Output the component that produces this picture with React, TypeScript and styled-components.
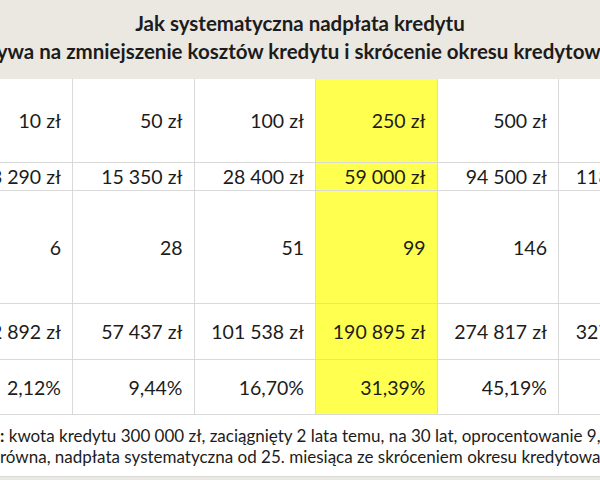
import React from "react";
import styled, { createGlobalStyle } from "styled-components";

const Global = createGlobalStyle`
  html, body { margin: 0; padding: 0; background: #ffffff; }
  body { font-family: Lato, "Noto Sans", sans-serif; color: #1c1c1c; }
`;

const Viewport = styled.div`
  width: 600px;
  height: 480px;
  overflow: hidden;
  background: #ebe8e1;
`;

const Sheet = styled.div`
  width: 1000px;
  margin-left: -200px;
  display: flex;
  flex-direction: column;
`;

const TitleBand = styled.header`
  height: 79px;
  box-sizing: border-box;
  padding-top: 9px;
  background: #ebe8e1;
  display: flex;
  flex-direction: column;
  align-items: center;
  font-weight: 700;
  font-size: 20.5px;
  line-height: 28px;
  white-space: nowrap;
`;

const Table = styled.div`
  display: grid;
  grid-template-columns: 151.5px repeat(7, 121.5px);
  background: #ffffff;
`;

const Cell = styled.div<{ $h: number; $hl?: boolean }>`
  height: ${(p) => p.$h}px;
  box-sizing: border-box;
  border-right: 1px solid #d9d9d9;
  border-bottom: 1px solid #d9d9d9;
  background: ${(p) => (p.$hl ? "#ffff4f" : "#ffffff")};
  display: flex;
  align-items: center;
  justify-content: flex-end;
  padding-right: 11px;
  font-size: 19.5px;
  white-space: nowrap;
`;

const Label = styled(Cell)`
  justify-content: flex-start;
  padding-left: 8px;
  font-size: 15px;
`;

const Footnote = styled.div`
  background: #ffffff;
  border-bottom: 1px solid #d9d9d9;
  height: 62px;
  box-sizing: border-box;
  padding-top: 10px;
  display: flex;
  flex-direction: column;
  font-size: 17px;
  line-height: 21px;
`;

const FootLine = styled.div`
  display: grid;
  grid-template-columns: 200px 1fr;
  white-space: nowrap;
`;

const Prefix = styled.span`
  text-align: right;
  overflow: hidden;
`;

const rows: { label: string; h: number; values: string[] }[] = [
  { label: "Nadpłata miesięczna", h: 84, values: ["10 zł", "50 zł", "100 zł", "250 zł", "500 zł", "1 000 zł", "2 000 zł"] },
  { label: "Suma nadpłat", h: 28, values: ["3 290 zł", "15 350 zł", "28 400 zł", "59 000 zł", "94 500 zł", "118 000 zł", "148 000 zł"] },
  { label: "Skrócenie okresu (mies.)", h: 113, values: ["6", "28", "51", "99", "146", "190", "240"] },
  { label: "Oszczędność na odsetkach", h: 56, values: ["12 892 zł", "57 437 zł", "101 538 zł", "190 895 zł", "274 817 zł", "327 560 zł", "380 120 zł"] },
  { label: "Spadek kosztów", h: 55, values: ["2,12%", "9,44%", "16,70%", "31,39%", "45,19%", "53,86%", "62,50%"] },
];

export default function App() {
  return (
    <>
      <Global />
      <Viewport>
        <Sheet>
          <TitleBand>
            <div>Jak systematyczna nadpłata kredytu</div>
            <div>wpływa na zmniejszenie kosztów kredytu i skrócenie okresu kredytowania</div>
          </TitleBand>
          <Table>
            {rows.map((r) => (
              <React.Fragment key={r.label}>
                <Label $h={r.h}>{r.label}</Label>
                {r.values.map((v, i) => (
                  <Cell key={i} $h={r.h} $hl={i === 3}>
                    {v}
                  </Cell>
                ))}
              </React.Fragment>
            ))}
          </Table>
          <Footnote>
            <FootLine>
              <Prefix>
                <b>Założenia</b>
              </Prefix>
              <span>
                <b>:</b> kwota kredytu 300 000 zł, zaciągnięty 2 lata temu, na 30 lat, oprocentowanie 9,5%, rata
              </span>
            </FootLine>
            <FootLine>
              <Prefix>rata </Prefix>
              <span>równa, nadpłata systematyczna od 25. miesiąca ze skróceniem okresu kredytowania</span>
            </FootLine>
          </Footnote>
        </Sheet>
      </Viewport>
    </>
  );
}
